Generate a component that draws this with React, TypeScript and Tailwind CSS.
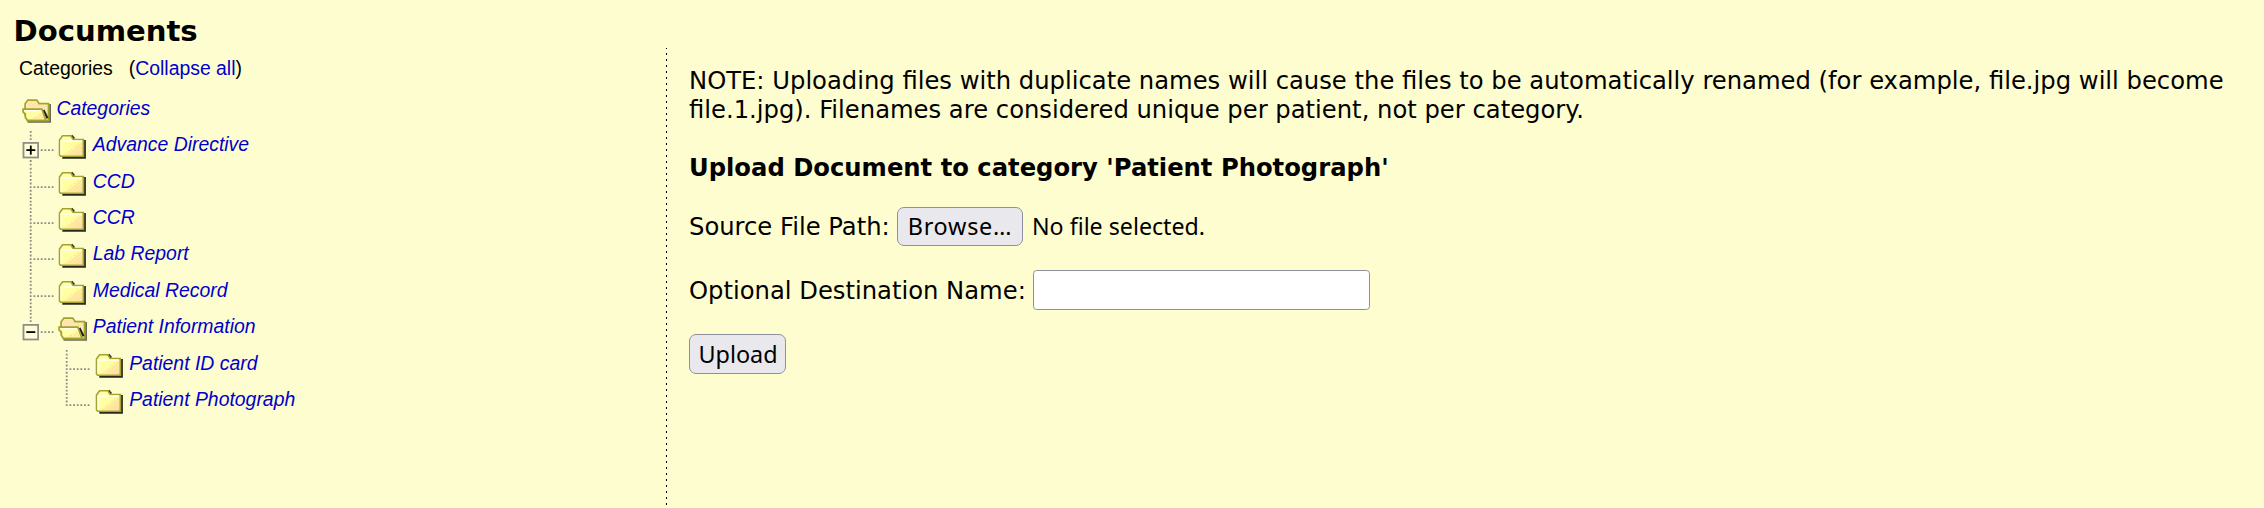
import React from "react";

type Branch = "plus" | "minus" | "tee" | "corner" | "none";

interface Row {
  label: string;
  branch: Branch;
  level: number;
  open?: boolean;
}

const rows: Row[] = [
  { label: "Categories", branch: "none", level: 0, open: true },
  { label: "Advance Directive", branch: "plus", level: 1 },
  { label: "CCD", branch: "tee", level: 1 },
  { label: "CCR", branch: "tee", level: 1 },
  { label: "Lab Report", branch: "tee", level: 1 },
  { label: "Medical Record", branch: "tee", level: 1 },
  { label: "Patient Information", branch: "minus", level: 1, open: true },
  { label: "Patient ID card", branch: "tee", level: 2 },
  { label: "Patient Photograph", branch: "corner", level: 2 },
];

const cell = "block h-[36.4px] w-[36.4px] shrink-0 overflow-visible";

function BranchIcon({ kind }: { kind: Branch }) {
  const boxed = kind === "plus" || kind === "minus";
  const dots = { stroke: "#8c8c84", strokeWidth: 1.8, strokeDasharray: "1.82 1.82" };
  return (
    <svg className={cell} viewBox="0 0 36.4 36.4">
      {boxed ? (
        <>
          <line x1="10.7" y1="0" x2="10.7" y2="10" {...dots} />
          {kind === "plus" && <line x1="10.7" y1="29.1" x2="10.7" y2="36.4" {...dots} />}
          <line x1="20.8" y1="19.1" x2="34" y2="19.1" {...dots} />
          <rect x="3.5" y="11.9" width="14.6" height="14.6" fill="#fefdd8" stroke="#8f8f87" strokeWidth="1.8" />
          <line x1="6.3" y1="19.1" x2="15.3" y2="19.1" stroke="#000" strokeWidth="1.8" />
          {kind === "plus" && <line x1="10.8" y1="14.6" x2="10.8" y2="23.7" stroke="#000" strokeWidth="1.8" />}
        </>
      ) : (
        <>
          <line x1="10.7" y1="0" x2="10.7" y2={kind === "corner" ? "20" : "36.4"} {...dots} />
          <line x1="13.5" y1="19.1" x2="34" y2="19.1" {...dots} />
        </>
      )}
    </svg>
  );
}

function FolderDefs() {
  return (
    <svg className="absolute h-0 w-0">
      <defs>
        <pattern id="dither" width="3.64" height="3.64" patternUnits="userSpaceOnUse">
          <rect width="1.82" height="1.82" fill="#ffcc99" />
          <rect x="1.82" y="1.82" width="1.82" height="1.82" fill="#ffcc99" />
        </pattern>
        <linearGradient id="paper" x1="0" y1="0" x2="1" y2="1">
          <stop offset="0" stopColor="#ffffb4" />
          <stop offset="0.5" stopColor="#ffffa0" />
          <stop offset="1" stopColor="#ffe0a4" />
        </linearGradient>
      </defs>
    </svg>
  );
}

function ClosedFolder() {
  return (
    <svg className={cell} viewBox="0 0.6 36.4 36.4">
      <path d="M6.3 27.4H29V9.5" fill="none" stroke="#2a2a1c" strokeWidth="1.8" />
      <path d="M15.4 5.2L18.2 8.4" stroke="#2a2a1c" strokeWidth="2.2" />
      <path
        d="M3.5 24.6V9.6L6.6 5.4H14.8L17.4 9.2H27.3V25.9H4.6Z"
        fill="url(#paper)"
        stroke="#a3a32c"
        strokeWidth="1.6"
      />
      <path d="M26.2 12V25H9V23H12V20.6H15V18.4H18V15.6H21V13H24V12Z" fill="url(#dither)" opacity="0.55" />
      <path d="M5.1 24V10.6H26" fill="none" stroke="#fffff0" strokeWidth="1.4" />
    </svg>
  );
}

function OpenFolder() {
  return (
    <svg className={cell} viewBox="0.5 0.4 36.4 36.4">
      <path d="M8 27.2H30.6V9.5" fill="none" stroke="#68685c" strokeWidth="1.8" />
      <path
        d="M5.6 14V9.2L8.4 5.5H17.2L19.6 9H29V26H8L5.6 20Z"
        fill="#ffeeb4"
        stroke="#a3a32c"
        strokeWidth="1.7"
      />
      <path d="M7 9.6L9 6.6H16.6L19.2 10.2H27.8V14H7Z" fill="url(#dither)" opacity="0.55" />
      <path d="M24 15.4L28 23.6" stroke="#22221a" strokeWidth="2.2" />
      <path
        d="M3.6 14.6H22.4L26.4 25.8H8L5.8 22.6V19.4L3.6 17.6Z"
        fill="#ffffa4"
        stroke="#a3a32c"
        strokeWidth="1.7"
      />
      <path d="M12 24.8L14.6 21.8H17.4L20 18.8H23L25 24.8Z" fill="url(#dither)" opacity="0.7" />
      <path d="M5 16H21.6" stroke="#fffff0" strokeWidth="1.2" />
    </svg>
  );
}

function TreeRow({ row }: { row: Row }) {
  return (
    <li className="flex h-[36.36px]">
      {row.level === 2 && <span className="w-[36.4px] shrink-0" />}
      {row.branch !== "none" && <BranchIcon kind={row.branch} />}
      {row.open ? <OpenFolder /> : <ClosedFolder />}
      <a className="whitespace-nowrap text-[19.4px] leading-[26.6px] text-[#0000cc] italic">{row.label}</a>
    </li>
  );
}

const dejavu = "font-['DejaVu_Sans',sans-serif]";
const noto = "font-['Noto_Sans',sans-serif]";

export default function App() {
  return (
    <div className={`flex h-[508px] w-full flex-col overflow-hidden bg-[#fefdcf] text-black ${dejavu}`}>
      <FolderDefs />
      <h1 className="h-12 shrink-0 pt-[14px] pl-[13.5px] text-[29.12px] leading-[35px] font-bold">Documents</h1>
      <div className="flex min-h-0 flex-1">
        <aside className="w-[666px] shrink-0 font-['Liberation_Sans',Arial,sans-serif]">
          <div className="flex h-[47px] gap-[16px] pt-[9px] pl-[19px] text-[19.4px] leading-[22px]">
            <span>Categories</span>
            <span>
              (<a className="text-[#0000cc]">Collapse all</a>)
            </span>
          </div>
          <ul className="pl-5">
            {rows.map((row) => (
              <TreeRow key={row.label} row={row} />
            ))}
          </ul>
        </aside>
        <div className="w-px shrink-0 bg-[linear-gradient(to_bottom,#000_2px,transparent_2px)] bg-[length:1px_6px] bg-[position:0_5px]" />
        <main className="flex-1 pt-[18px] pl-[22px] text-[24.25px] leading-[29px]">
          <p className="w-[1550px]">
            NOTE: Uploading files with duplicate names will cause the files to be automatically renamed (for example,
            file.jpg will become file.1.jpg). Filenames are considered unique per patient, not per category.
          </p>
          <h2 className="mt-[29px] font-bold">Upload Document to category 'Patient Photograph'</h2>
          <div className="mt-[25px] flex h-[39px]">
            <span className="w-[208px] pt-[5px] whitespace-nowrap">Source File Path:</span>
            <button
              className={`h-[39px] w-[126px] rounded-[7px] border border-[#8f8f9d] bg-[#e9e9ed] text-[23.4px] leading-[35px] tracking-[0.75px] ${noto}`}
            >
              Browse…
            </button>
            <span className={`pt-[5px] pl-[9px] text-[23.2px] whitespace-nowrap ${noto}`}>No file selected.</span>
          </div>
          <div className="mt-6 flex h-10">
            <span className="w-[344px] pt-[6px] whitespace-nowrap">Optional Destination Name:</span>
            <input className="h-10 w-[337px] rounded-[3.6px] border border-[#8f8f9d] bg-white" />
          </div>
          <button
            className={`mt-6 block h-10 w-[97px] rounded-[7px] border border-[#8f8f9d] bg-[#e9e9ed] pl-px text-[23.4px] leading-[38px] ${noto}`}
          >
            Upload
          </button>
        </main>
      </div>
    </div>
  );
}
